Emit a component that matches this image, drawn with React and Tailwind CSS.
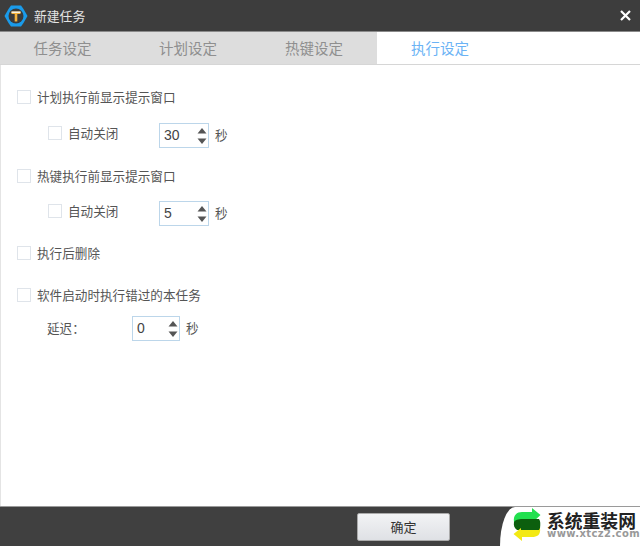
import React from 'react';

const font = { fontFamily: '"Noto Sans CJK SC", "Liberation Sans", sans-serif' };

const Check = ({ label, className = '' }) => (
    <div className={`flex items-center h-[14px] ${className}`}>
        <span className="w-[14px] h-[14px] border border-[#dfe4ea] bg-white shrink-0"></span>
        <span className="ml-[6px] text-[12.6px] leading-[16px] text-[#555] whitespace-nowrap">{label}</span>
    </div>
);

const Spinner = ({ value, wide = true }) => (
    <div className="flex items-center">
        <div className={`${wide ? 'w-[50px]' : 'w-[48px]'} h-[25px] border border-[#bcd6ea] bg-white flex items-center justify-between pl-[4px] pr-[1px]`}>
            <span className="text-[14px] text-[#444]" style={{ fontFamily: '"Liberation Sans", sans-serif' }}>{value}</span>
            <svg width="10" height="18" viewBox="0 0 10 18" fill="#555">
                <path d="M5 1 L9.5 6.5 L0.5 6.5 Z" />
                <path d="M0.5 11.5 L9.5 11.5 L5 17 Z" />
            </svg>
        </div>
        <span className="ml-[6px] text-[12.6px] text-[#555]">秒</span>
    </div>
);

const tabs = ['任务设定', '计划设定', '热键设定', '执行设定'];

export default function App() {
    return (
        <div className="relative w-[640px] h-[546px] flex flex-col bg-white overflow-hidden" style={font}>
            {/* 标题栏 */}
            <div className="h-[32px] shrink-0 bg-[#3d3d3d] border-b border-[#8a8a8a] flex items-center justify-between pl-[4px] pr-[9px]">
                <div className="flex items-center">
                    <svg width="24" height="24" viewBox="0 0 24 24">
                        <path d="M7 1.5 L17 1.5 L19.5 5 L23.5 12 L19.5 19 L17 22.5 L7 22.5 L4.5 19 L0.5 12 L4.5 5 Z" fill="#1a9bea" />
                        <circle cx="12" cy="12" r="7.5" fill="#3b3b3b" />
                        <path d="M7.5 7.5 H16.5 V10 H13.3 V17.5 H10.7 V10 H7.5 Z" fill="#f3b23c" />
                        <path d="M7.5 7.5 H16.5 V9 H7.5 Z" fill="#f7f2e2" />
                    </svg>
                    <span className="ml-[6px] text-[12.8px] text-[#e4e4e4]">新建任务</span>
                </div>
                <svg width="11" height="11" viewBox="0 0 11 11" stroke="#fff" strokeWidth="2.2">
                    <path d="M1 1 L10 10 M10 1 L1 10" />
                </svg>
            </div>

            {/* 选项卡 */}
            <div className="h-[33px] shrink-0 flex border-b border-[#d6d6d6]">
                {tabs.map((t, i) => (
                    <div
                        key={t}
                        className={`flex items-center justify-center text-[14.5px] ${i === 3 ? 'w-[126px] bg-white text-[#6bb3f5]' : i === 0 ? 'w-[125px] bg-[#dddddd] text-[#8f8f8f]' : 'w-[126px] bg-[#dddddd] text-[#8f8f8f]'}`}
                    >
                        {t}
                    </div>
                ))}
            </div>

            {/* 内容 */}
            <div className="flex-1 border-l border-[#e4e4e4] pl-[16px] pt-[25px]">
                <Check label="计划执行前显示提示窗口" />
                <div className="flex items-start mt-[19px] pl-[31px]">
                    <Check label="自动关闭" className="w-[111px] mt-[3px]" />
                    <Spinner value="30" />
                </div>
                <Check label="热键执行前显示提示窗口" className="mt-[21px]" />
                <div className="flex items-start mt-[18px] pl-[31px]">
                    <Check label="自动关闭" className="w-[111px] mt-[3px]" />
                    <Spinner value="5" />
                </div>
                <Check label="执行后删除" className="mt-[20px]" />
                <Check label="软件启动时执行错过的本任务" className="mt-[28px]" />
                <div className="flex items-center mt-[14px] pl-[30px]">
                    <span className="w-[85px] text-[12.6px] text-[#555]">延迟：</span>
                    <Spinner value="0" wide={false} />
                </div>
            </div>

            {/* 底部 */}
            <div className="h-[40px] shrink-0 bg-[#404040] border-t border-[#9a9a9a] flex items-center pl-[357px]">
                <button className="w-[93px] h-[28px] rounded-[2px] border border-[#aaa] bg-gradient-to-b from-[#f2f3f5] to-[#dfe1e5] text-[13px] text-[#333]">
                    确定
                </button>
            </div>

            {/* 水印 */}
            <div className="absolute right-0 bottom-0 w-[140px] h-[39px] bg-white rounded-tl-[15px_39px] pl-[13px] pt-[1px] flex items-start">
                <svg width="28" height="33" viewBox="0 0 28 33" className="shrink-0">
                    <path d="M1 14 C0 7 4 4 9 4 H19 V0 L27.5 7 L20 14 Z" fill="#22e04f" />
                    <path d="M1 14 C3 11 7 11 11 11 H26 C27.5 13 27.5 16 27 20 C25 21 22 22 18 22 H4 C1 20 0.5 17 1 14 Z" fill="#0c5f0e" />
                    <path d="M27 20 C28 27 24 29 19 29 H9 V33 L0.5 26 L8 20 Z" fill="#f3e913" />
                    <path d="M8 20 H27 L26 22 H8 Z" fill="#0c5f0e" />
                </svg>
                <div className="ml-[6px] flex flex-col">
                    <span className="text-[17.8px] leading-[18px] mt-[3px] font-bold text-[#222] whitespace-nowrap">系统重装网</span>
                    <span className="text-[10px] leading-[10px] font-bold text-[#999] tracking-[0.4px] whitespace-nowrap" style={{ fontFamily: '"DejaVu Sans", sans-serif' }}>www.xtcz2.com</span>
                </div>
            </div>
        </div>
    );
}
